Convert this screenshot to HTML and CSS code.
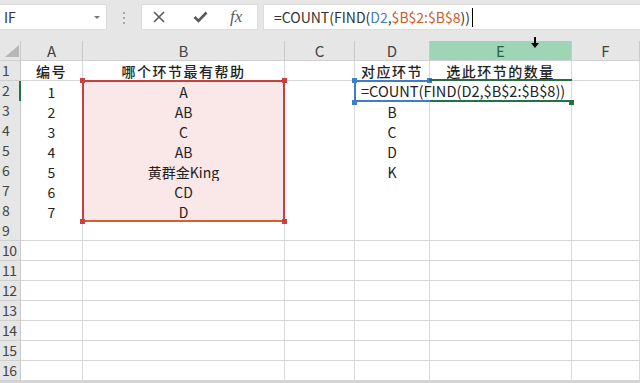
FILE: index.html
```html
<!DOCTYPE html>
<html>
<head>
    <meta charset="utf-8">
    <link rel="stylesheet" href="styles.css">
</head>
<body>
    <div class="toolbar">
        <div class="namebox">
            <span>IF</span>
            <span class="drop"></span>
        </div>
        <div class="grip"><i></i><i></i><i></i></div>
        <div class="fbuttons">
            <svg class="ico-x" width="12" height="12" viewBox="0 0 12 12"><path d="M1 1L11 11M11 1L1 11" stroke="#5a5a5a" stroke-width="1.6" fill="none"/></svg>
            <svg class="ico-ok" width="15" height="12" viewBox="0 0 15 12"><path d="M1.5 6L5.5 10L13.5 1.5" stroke="#5a5a5a" stroke-width="2.6" fill="none"/></svg>
            <span class="fx">fx</span>
        </div>
        <div class="formula">=COUNT(FIND(<span class="ref1">D2</span>,<span class="ref2">$B$2:$B$8</span>))<span class="cursor"></span></div>
    </div>

    <div class="sheet">
        <div class="row head">
            <div class="hc corner"><span class="tri"></span></div>
            <div class="hc">A</div>
            <div class="hc">B</div>
            <div class="hc">C</div>
            <div class="hc">D</div>
            <div class="hc on">E</div>
            <div class="hc">F</div>
        </div>
        <div class="row">
            <div class="rh">1</div>
            <div class="c t cn">编号</div>
            <div class="c t cn">哪个环节最有帮助</div>
            <div class="c"></div>
            <div class="c t cn">对应环节</div>
            <div class="c t cn">选此环节的数量</div>
            <div class="c"></div>
        </div>
        <div class="row">
            <div class="rh on">2</div>
            <div class="c">1</div>
            <div class="c pk">A</div>
            <div class="c"></div>
            <div class="c"></div>
            <div class="c"></div>
            <div class="c"></div>
        </div>
        <div class="row">
            <div class="rh">3</div>
            <div class="c">2</div>
            <div class="c pk">AB</div>
            <div class="c"></div>
            <div class="c">B</div>
            <div class="c"></div>
            <div class="c"></div>
        </div>
        <div class="row">
            <div class="rh">4</div>
            <div class="c">3</div>
            <div class="c pk">C</div>
            <div class="c"></div>
            <div class="c">C</div>
            <div class="c"></div>
            <div class="c"></div>
        </div>
        <div class="row">
            <div class="rh">5</div>
            <div class="c">4</div>
            <div class="c pk">AB</div>
            <div class="c"></div>
            <div class="c">D</div>
            <div class="c"></div>
            <div class="c"></div>
        </div>
        <div class="row">
            <div class="rh">6</div>
            <div class="c">5</div>
            <div class="c pk">黄群金King</div>
            <div class="c"></div>
            <div class="c">K</div>
            <div class="c"></div>
            <div class="c"></div>
        </div>
        <div class="row">
            <div class="rh">7</div>
            <div class="c">6</div>
            <div class="c pk">CD</div>
            <div class="c"></div>
            <div class="c"></div>
            <div class="c"></div>
            <div class="c"></div>
        </div>
        <div class="row">
            <div class="rh">8</div>
            <div class="c">7</div>
            <div class="c pk">D</div>
            <div class="c"></div>
            <div class="c"></div>
            <div class="c"></div>
            <div class="c"></div>
        </div>
        <div class="row">
            <div class="rh">9</div>
            <div class="c"></div><div class="c"></div><div class="c"></div><div class="c"></div><div class="c"></div><div class="c"></div>
        </div>
        <div class="row">
            <div class="rh">10</div>
            <div class="c"></div><div class="c"></div><div class="c"></div><div class="c"></div><div class="c"></div><div class="c"></div>
        </div>
        <div class="row">
            <div class="rh">11</div>
            <div class="c"></div><div class="c"></div><div class="c"></div><div class="c"></div><div class="c"></div><div class="c"></div>
        </div>
        <div class="row">
            <div class="rh">12</div>
            <div class="c"></div><div class="c"></div><div class="c"></div><div class="c"></div><div class="c"></div><div class="c"></div>
        </div>
        <div class="row">
            <div class="rh">13</div>
            <div class="c"></div><div class="c"></div><div class="c"></div><div class="c"></div><div class="c"></div><div class="c"></div>
        </div>
        <div class="row">
            <div class="rh">14</div>
            <div class="c"></div><div class="c"></div><div class="c"></div><div class="c"></div><div class="c"></div><div class="c"></div>
        </div>
        <div class="row">
            <div class="rh">15</div>
            <div class="c"></div><div class="c"></div><div class="c"></div><div class="c"></div><div class="c"></div><div class="c"></div>
        </div>
        <div class="row">
            <div class="rh">16</div>
            <div class="c"></div><div class="c"></div><div class="c"></div><div class="c"></div><div class="c"></div><div class="c"></div>
        </div>

        <!-- selection overlays -->
        <div class="range-b"></div>
        <div class="hd red" style="left:80px;top:37px"></div>
        <div class="hd red" style="left:282px;top:37px"></div>
        <div class="hd red" style="left:80px;top:178px"></div>
        <div class="hd red" style="left:282px;top:178px"></div>

        <div class="edit">=COUNT(FIND(D2,$B$2:$B$8))</div>
        <div class="range-d"></div>
        <div class="hd blue" style="left:352px;top:37px"></div>
        <div class="hd blue" style="left:427px;top:37px"></div>
        <div class="hd blue" style="left:352px;top:59px"></div>

        <div class="e1-line"></div>
        <div class="e2-line"></div>
        <div class="hd green" style="left:569px;top:59px"></div>

        <svg class="mouse" width="8" height="11" viewBox="0 0 8 11"><path d="M3 0H5V6H8L4 11L0 6H3Z" fill="#000"/></svg>
    </div>
</body>
</html>
```

FILE: styles.css
```css
*{
    box-sizing: border-box;
}
body{
    margin: 0;
    width: 640px;
    height: 383px;
    overflow: hidden;
    background-color: #d4d4d4;
    font-family: "Noto Sans CJK SC", sans-serif;
}

/* formula bar */
.toolbar{
    height: 41px;
    padding-top: 4px;
    display: flex;
    align-items: flex-start;
    background-color: #e6e6e6;
}
.namebox{
    width: 107px;
    height: 26px;
    background-color: #fff;
    border: 1px solid #dcdcdc;
    border-left: 0;
    display: flex;
    align-items: center;
    justify-content: space-between;
    padding: 0 6px 0 4px;
    font-size: 14px;
    color: #333;
}
.drop{
    width: 0;
    height: 0;
    border-left: 3px solid transparent;
    border-right: 3px solid transparent;
    border-top: 3px solid #777;
}
.grip{
    width: 2px;
    margin: 8px 16px 0 16px;
    display: flex;
    flex-direction: column;
    gap: 3px;
}
.grip i{
    width: 2px;
    height: 2px;
    background-color: #a8a8a8;
}
.fbuttons{
    width: 117px;
    height: 26px;
    background-color: #fff;
    border: 1px solid #dcdcdc;
    display: flex;
    align-items: center;
}
.ico-x{
    margin-left: 11px;
}
.ico-ok{
    margin-left: 28px;
}
.fx{
    margin-left: 22px;
    font-family: "Liberation Serif", serif;
    font-style: italic;
    font-size: 17px;
    color: #5a5a5a;
    line-height: 20px;
}
.formula{
    flex: 1;
    margin-left: 5px;
    height: 26px;
    background-color: #fff;
    border: 1px solid #dcdcdc;
    border-right: 0;
    padding-left: 10px;
    font-size: 14px;
    line-height: 24px;
    color: #333;
    white-space: nowrap;
}
.ref1{
    color: #3e7cc6;
}
.ref2{
    color: #cc5a2a;
}
.cursor{
    display: inline-block;
    width: 1px;
    height: 19px;
    margin-left: 2px;
    vertical-align: -4px;
    background-color: #000;
}

/* sheet */
.sheet{
    position: relative;
    width: 640px;
}
.row{
    display: grid;
    grid-template-columns: 21px 62px 202px 70px 75px 142px 68px;
    height: 20px;
}
.hc{
    background-color: #e6e6e6;
    border-right: 1px solid #c9c9c9;
    border-bottom: 1px solid #d0d0d0;
    text-align: center;
    font-size: 15px;
    line-height: 19px;
    color: #444;
}
.hc.on{
    background-color: #9fd5b7;
    color: #2b5e3e;
}
.corner{
    display: flex;
    justify-content: flex-end;
    align-items: flex-end;
    padding: 0 1px 3px 0;
}
.tri{
    width: 14px;
    height: 12px;
    background-color: #b7b7b7;
    clip-path: polygon(100% 0, 100% 100%, 0 100%);
}
.rh{
    background-color: #e6e6e6;
    border-right: 1px solid #c9c9c9;
    border-bottom: 1px solid #d0d0d0;
    font-size: 14px;
    line-height: 19px;
    padding-left: 2px;
    color: #444;
    letter-spacing: -0.5px;
}
.rh.on{
    border-right: 2px solid #217346;
}
.c{
    background-color: #fff;
    border-right: 1px solid #dadada;
    border-bottom: 1px solid #d6d6d6;
    text-align: center;
    font-size: 14px;
    line-height: 19px;
    padding-top: 2px;
    color: #222;
    white-space: nowrap;
}
.c.t{
    font-weight: 500;
    line-height: 18px;
    padding-top: 1px;
}
.cn{
    letter-spacing: 1.5px;
}
.c.pk{
    background-color: #fae7e8;
}

/* overlays */
.range-b{
    position: absolute;
    left: 82px;
    top: 39px;
    width: 203px;
    height: 142px;
    border: 2px solid #c9413f;
    border-bottom-color: #d4602e;
}
.hd{
    position: absolute;
    width: 5px;
    height: 5px;
}
.hd.red{
    background-color: #c9413f;
}
.hd.blue{
    background-color: #3f7dc8;
}
.hd.green{
    background-color: #217346;
}
.edit{
    position: absolute;
    left: 356px;
    top: 41px;
    width: 215px;
    height: 18px;
    background-color: #fff;
    padding-left: 5px;
    font-size: 14.6px;
    line-height: 18px;
    color: #222;
    white-space: nowrap;
}
.range-d{
    position: absolute;
    left: 354px;
    top: 39px;
    width: 76px;
    height: 22px;
    border: 2px solid #3f7dc8;
    border-right: 0;
}
.e1-line{
    position: absolute;
    left: 429px;
    top: 38px;
    width: 143px;
    height: 2px;
    background-color: #2a6a42;
}
.e2-line{
    position: absolute;
    left: 430px;
    top: 59px;
    width: 141px;
    height: 2px;
    background-color: #217346;
}
.mouse{
    position: absolute;
    left: 531px;
    top: -4px;
}
```
